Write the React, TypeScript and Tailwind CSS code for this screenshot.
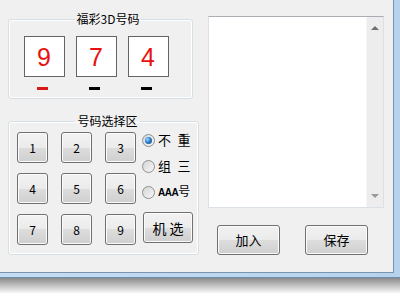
import React from "react";

const cjk = "font-['SimSun','Noto_Sans_CJK_SC',sans-serif]";

// Win7 style push button
const WinButton = ({ children, className = "" }: { children: React.ReactNode; className?: string }) => (
  <div
    className={`flex items-center justify-center rounded-[3px] border border-[#707070] bg-[linear-gradient(#f2f2f2_0%,#ebebeb_50%,#dddddd_50%,#cfcfcf_100%)] shadow-[inset_0_0_0_1px_#fbfbfb] text-black ${className}`}
  >
    {children}
  </div>
);

const Radio = ({ checked, children }: { checked?: boolean; children: React.ReactNode }) => (
  <div className="flex h-[16px] items-center gap-[3px]">
    <div className="flex h-[13px] w-[13px] items-center justify-center rounded-full border border-[#8e8f8f] bg-[linear-gradient(135deg,#d5d5d5,#f7f7f7)]">
      {checked && (
        <div className="h-[7px] w-[7px] rounded-full bg-[radial-gradient(circle_at_35%_35%,#9fd6ff_0%,#2d7fcf_45%,#0c3f78_100%)]" />
      )}
    </div>
    {children}
  </div>
);

const digits = [
  { n: "9", red: true },
  { n: "7", red: false },
  { n: "4", red: false },
];

const groupBox =
  "rounded-[3px] border border-[#d5dfe5] shadow-[inset_0_0_0_1px_#ffffff]";

export default function App() {
  return (
    <div className={`h-[300px] w-[400px] overflow-hidden bg-white ${cjk} text-[12px] leading-[14px]`}>
      {/* window frame */}
      <div className="h-[278px] w-[400px] border-b border-[#6f8cab] bg-[linear-gradient(90deg,#c4ddf3,#b6d3ee)] pb-[4px] pr-[6px]">
        <div className="flex h-full w-full border-b border-r border-[#7d93ab] bg-[#f0f0f0] pl-[8px]">
          {/* left column */}
          <div className="flex w-[191px] flex-col">
            <fieldset className={`mt-[12px] h-[87px] w-[185px] ${groupBox} pl-[15px] pt-[10px]`}>
              <legend className="mx-auto px-[2px] text-[12px] leading-[14px]">福彩3D号码</legend>
              <div className="flex gap-[12px]">
                {digits.map((d) => (
                  <div key={d.n} className="flex w-[40px] flex-col items-center">
                    <div className="flex h-[41px] w-[41px] items-center justify-center border border-[#646464] bg-white font-['Liberation_Sans',sans-serif] text-[25px] text-[#e81010]">
                      {d.n}
                    </div>
                    <div className={`mr-[3px] mt-[10px] h-[3px] w-[11px] ${d.red ? "bg-[#d81818]" : "bg-black"}`} />
                  </div>
                ))}
              </div>
            </fieldset>

            <fieldset className={`mt-[15px] h-[141px] w-[191px] ${groupBox} pl-[8px] pt-[4px]`}>
              <legend className="mx-auto px-[2px] text-[12px] leading-[14px]">号码选择区</legend>
              <div className="flex">
                <div className="grid grid-cols-[30px_30px_30px] gap-x-[14px] gap-y-[10px]">
                  {["1", "2", "3", "4", "5", "6", "7", "8", "9"].map((n) => (
                    <WinButton key={n} className="h-[31px] w-[31px] text-[12px]">
                      {n}
                    </WinButton>
                  ))}
                </div>
                <div className="ml-[7px] flex h-[111px] flex-col justify-between">
                  <div className="flex flex-col gap-[10px]">
                    <Radio checked>
                      <span className="text-[13px]">不&#8194;重</span>
                    </Radio>
                    <Radio>
                      <span className="text-[13px]">组&#8194;三</span>
                    </Radio>
                    <Radio>
                      <span className="text-[12px]">
                        <span className="font-['Liberation_Sans_Narrow','Liberation_Sans',sans-serif] text-[10px] font-bold tracking-[-0.5px]">AAA</span>号
                      </span>
                    </Radio>
                  </div>
                  <WinButton className="ml-[1px] h-[31px] w-[50px] text-[14px]">机 选</WinButton>
                </div>
              </div>
            </fieldset>
          </div>

          {/* right column */}
          <div className="ml-[9px] flex flex-col">
            <div className="mt-[16px] flex h-[192px] w-[176px] border border-[#dbdfe6] border-t-[#abadb3] bg-white">
              <div className="flex-1" />
              <div className="flex w-[17px] flex-col items-center justify-between border-l border-[#f6f6f6] bg-[#ededed] py-[9px]">
                <div className="h-0 w-0 border-x-[4px] border-b-[4px] border-x-transparent border-b-[#707070]" />
                <div className="h-0 w-0 border-x-[4px] border-t-[4px] border-x-transparent border-t-[#9a9a9a]" />
              </div>
            </div>
            <div className="ml-[9px] mt-[17px] flex gap-[25px]">
              <WinButton className="h-[30px] w-[63px] text-[13px]">加入</WinButton>
              <WinButton className="h-[30px] w-[63px] text-[13px]">保存</WinButton>
            </div>
          </div>
        </div>
      </div>
      {/* drop shadow under the window */}
      <div className="h-[16px] w-[400px] bg-[linear-gradient(#8a8a8a,#ffffff)]" />
    </div>
  );
}
